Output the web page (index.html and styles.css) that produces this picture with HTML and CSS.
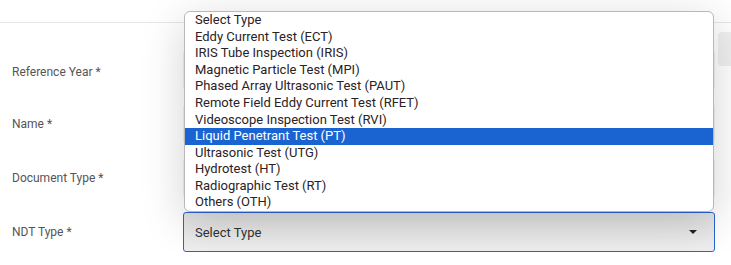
FILE: index.html
```html
<!DOCTYPE html>
<html lang="en">
	<head>
		<meta charset="UTF-8" />
		<meta name="viewport" content="width=device-width, initial-scale=1.0" />
		<title>NDT Document</title>
		<link rel="stylesheet" href="styles.css">
	</head>
	<body>
		<div class="topbar"></div>
		<div class="page">
			<form class="form">
				<div class="row">
					<label class="label">Reference Year *</label>
					<div class="field"><div class="input"></div></div>
				</div>
				<div class="row">
					<label class="label">Name *</label>
					<div class="field"><div class="input"></div></div>
				</div>
				<div class="row">
					<label class="label">Document Type *</label>
					<div class="field"><div class="input"></div></div>
				</div>
				<div class="row">
					<label class="label">NDT Type *</label>
					<div class="field select-wrap">
						<div class="select">
							<span>Select Type</span>
							<span class="caret"></span>
						</div>
						<ul class="popup">
							<li>Select Type</li>
							<li>Eddy Current Test (ECT)</li>
							<li>IRIS Tube Inspection (IRIS)</li>
							<li>Magnetic Particle Test (MPI)</li>
							<li>Phased Array Ultrasonic Test (PAUT)</li>
							<li>Remote Field Eddy Current Test (RFET)</li>
							<li>Videoscope Inspection Test (RVI)</li>
							<li class="active">Liquid Penetrant Test (PT)</li>
							<li>Ultrasonic Test (UTG)</li>
							<li>Hydrotest (HT)</li>
							<li>Radiographic Test (RT)</li>
							<li>Others (OTH)</li>
						</ul>
					</div>
				</div>
			</form>
			<aside class="side">
				<div class="side-box"></div>
			</aside>
		</div>
	</body>
</html>
```

FILE: styles.css
```css
:root {
	box-sizing: border-box;
}
*,
::before,
::after {
	box-sizing: inherit;
}
body {
	margin: 0;
	background-color: #fff;
	font-family: Roboto, "Liberation Sans", Arial, sans-serif;
	overflow: hidden;
}
.topbar {
	height: 23px;
	border-bottom: 1px solid #e6e6e6;
}
.page {
	display: flex;
}
.form {
	width: 715px;
	padding: 27px 0 0 12px;
	display: flex;
	flex-direction: column;
	gap: 14px;
}
.row {
	display: flex;
	align-items: center;
	height: 40px;
}
.row:first-child .label {
	margin-top: 3px;
}
.label {
	width: 171px;
	font-size: 12px;
	color: #555;
}
.field {
	flex: 1;
	height: 40px;
}
.input {
	height: 100%;
	background-color: #f0f0f0;
	border-radius: 4px;
}
.select-wrap {
	position: relative;
}
.select {
	height: 100%;
	display: flex;
	align-items: center;
	justify-content: space-between;
	padding: 0 17px 0 11px;
	font-size: 13px;
	color: #333;
	background: linear-gradient(#e2e2e2, #efefef);
	border: 1px solid #2a63d4;
	border-radius: 3px;
}
.caret {
	width: 0;
	height: 0;
	border-left: 4px solid transparent;
	border-right: 4px solid transparent;
	border-top: 4px solid #222;
}
.popup {
	position: absolute;
	z-index: 2;
	left: 1px;
	right: 1px;
	bottom: 100%;
	margin: 0;
	padding: 0;
	list-style: none;
	background-color: #fff;
	border: 1px solid #b8b8b8;
	border-radius: 6px;
	box-shadow: 0 10px 44px rgba(0, 0, 0, 0.18);
	font-size: 13px;
	color: #2b2226;
	overflow: hidden;
}
.popup li {
	height: 16.58px;
	line-height: 16.58px;
	padding-left: 10px;
}
.popup .active {
	background-color: #1a64d2;
	color: #fff;
}
.side {
	flex: 1;
	padding: 9px 0 0 3px;
}
.side-box {
	height: 34px;
	background-color: #f0f0f0;
	border-radius: 4px 0 0 4px;
}
```
